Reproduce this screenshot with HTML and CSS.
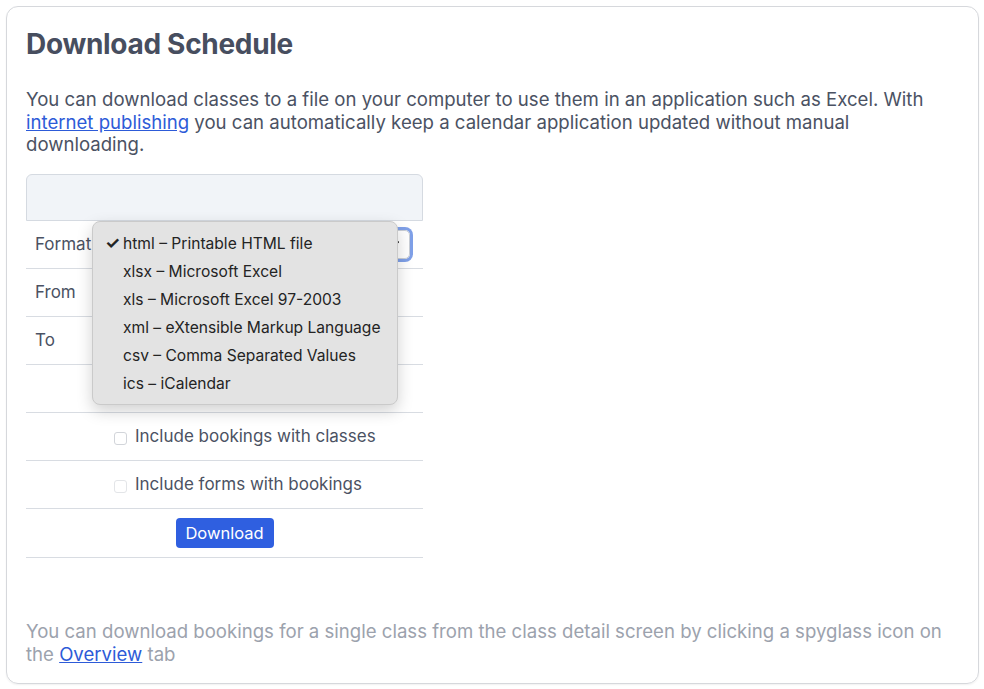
FILE: index.html
```html
<!DOCTYPE html>
<html>
<head>
<meta charset="utf-8">
<link rel="stylesheet" href="styles.css">
</head>
<body>
<div class="card">
  <h1 class="title">Download Schedule</h1>
  <p class="intro">You can download classes to a file on your computer to use them in an application such as Excel. With <a href="#">internet publishing</a> you can automatically keep a calendar application updated without manual downloading.</p>

  <div class="form">
    <div class="form-head"></div>
    <div class="row">
      <div class="label">Format</div>
      <div class="field">
        <div class="select">
          <span class="select-text">html – Printable HTML file</span>
          <svg class="chev" width="10" height="10" viewBox="0 0 10 10"><path d="M2 7 L7 3" stroke="#111" stroke-width="2" stroke-linecap="round" fill="none"/></svg>
        </div>
      </div>
    </div>
    <div class="row">
      <div class="label">From</div>
      <div class="field"></div>
    </div>
    <div class="row">
      <div class="label">To</div>
      <div class="field"></div>
    </div>
    <div class="row">
      <div class="label"></div>
      <div class="field"></div>
    </div>
    <div class="row">
      <div class="label"></div>
      <label class="field check"><span class="box"></span>Include bookings with classes</label>
    </div>
    <div class="row">
      <div class="label"></div>
      <label class="field check"><span class="box faint"></span>Include forms with bookings</label>
    </div>
    <div class="row row-action">
      <button class="btn">Download</button>
    </div>
  </div>

  <p class="note">You can download bookings for a single class from the class detail screen by clicking a spyglass icon on the <a href="#">Overview</a> tab</p>

  <div class="menu">
    <div class="menu-item selected"><span class="tick">✓</span>html – Printable HTML file</div>
    <div class="menu-item"><span class="tick"></span>xlsx – Microsoft Excel</div>
    <div class="menu-item"><span class="tick"></span>xls – Microsoft Excel 97-2003</div>
    <div class="menu-item"><span class="tick"></span>xml – eXtensible Markup Language</div>
    <div class="menu-item"><span class="tick"></span>csv – Comma Separated Values</div>
    <div class="menu-item"><span class="tick"></span>ics – iCalendar</div>
  </div>
</div>
</body>
</html>
```

FILE: styles.css
```css
* { box-sizing: border-box; }
html, body { margin: 0; padding: 0; background: #fff; }
body {
  font-family: Inter, "Liberation Sans", sans-serif;
  color: #4b5263;
}
.card {
  position: relative;
  margin: 6px 5px 5px 6px;
  height: 678px;
  border: 1px solid #d6d8dc;
  border-radius: 12px;
  box-shadow: 0 1px 2px rgba(0,0,0,0.06);
  padding: 21px 19px 18px 19px;
  display: flex;
  flex-direction: column;
}
.title {
  margin: 0;
  font-size: 28px;
  line-height: 32px;
  font-weight: 700;
  color: #474e5f;
  letter-spacing: -0.3px;
}
.intro {
  margin: 28px 0 0 0;
  font-size: 18.6px;
  line-height: 22.5px;
  color: #4b5263;
}
a { color: #2d5bd8; text-decoration: underline; }
.form {
  margin-top: 18px;
  width: 397px;
}
.form-head {
  height: 47px;
  background: #f1f4f8;
  border: 1px solid #d5dae1;
  border-radius: 6px 6px 0 0;
}
.row {
  display: grid;
  grid-template-columns: 78px 1fr;
  height: 48px;
  border-bottom: 1px solid #d8dce2;
  align-items: center;
}
.label {
  padding-left: 9px;
  font-size: 17px;
}
.field {
  display: flex;
  align-items: center;
  height: 100%;
}
.select {
  width: 306px;
  height: 29px;
  border: 1px solid #c9ced6;
  border-radius: 5px;
  box-shadow: 0 0 0 3px #7fa0e8;
  display: flex;
  align-items: center;
  justify-content: space-between;
  padding: 0 8px;
  font-size: 16px;
}
.chev { display: block; }
.check {
  padding-left: 10px;
  font-size: 17px;
  color: #4b5263;
  gap: 8px;
}
.box {
  width: 13px;
  height: 13px;
  border: 1px solid #d2d5da;
  border-radius: 3px;
  background: #fff;
  margin-top: 4px;
}
.box.faint { border-color: #e3e5e8; }
.row-action {
  display: flex;
  justify-content: center;
  height: 49px;
}
.btn {
  font-family: inherit;
  font-size: 16.5px;
  color: #fff;
  background: #2f5fe0;
  border: none;
  border-radius: 4px;
  width: 98px;
  height: 30px;
  padding: 0;
}
.note {
  margin: auto 0 0 0;
  font-size: 18.6px;
  line-height: 22.5px;
  color: #9ca2ad;
}
.menu {
  position: absolute;
  left: 85px;
  top: 214px;
  width: 306px;
  height: 184px;
  background: #e3e3e3;
  border: 1px solid #cacaca;
  border-radius: 8px;
  box-shadow: 0 6px 16px rgba(0,0,0,0.18);
  padding: 7px 0 0 0;
  font-size: 15.6px;
  color: #242424;
}
.menu-item {
  height: 28px;
  display: flex;
  align-items: center;
  padding-left: 12px;
}
.tick {
  display: inline-block;
  width: 18px;
  font-size: 17px;
  font-weight: 700;
}
```
